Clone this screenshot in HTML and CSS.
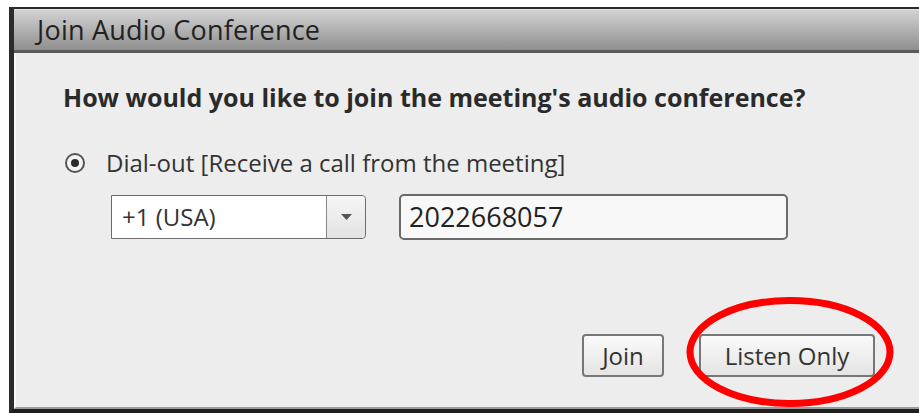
FILE: index.html
```html
<!DOCTYPE html>
<html lang="en">
<head>
<meta charset="utf-8">
<title>Join Audio Conference</title>
<link rel="stylesheet" href="styles.css">
</head>
<body>
<div class="dialog">
  <div class="titlebar">Join Audio Conference</div>
  <div class="content">
    <p class="question">How would you like to join the meeting's audio conference?</p>
    <label class="option">
      <span class="radio"><span class="dot"></span></span>
      <span>Dial-out [Receive a call from the meeting]</span>
    </label>
    <div class="fields">
      <div class="select">
        <span class="select-value">+1 (USA)</span>
        <span class="select-arrow"><svg width="11" height="6" viewBox="0 0 11 6"><path d="M0 0h11L5.5 6z" fill="#555"/></svg></span>
      </div>
      <div class="phone">2022668057</div>
    </div>
    <div class="actions">
      <button class="btn btn-join">Join</button>
      <button class="btn btn-listen">Listen Only</button>
      <svg class="highlight" width="214" height="116" viewBox="0 0 214 116">
        <ellipse cx="107" cy="58" rx="100" ry="51.5" fill="none" stroke="#f00" stroke-width="7"/>
      </svg>
    </div>
  </div>
</div>
</body>
</html>
```
FILE: styles.css
```css
html, body {
  margin: 0;
  padding: 0;
  background: #fff;
  overflow: hidden;
}

body {
  font-family: "Open Sans", "Noto Sans", sans-serif;
  color: #2a2a2a;
}

.dialog {
  margin: 7px 0 0 9px;
  height: 406px;
  border-top: 2px solid #2b2b2b;
  border-left: 5px solid #2b2b2b;
  border-bottom: 4px solid #1e1e1e;
  box-sizing: border-box;
  display: flex;
  flex-direction: column;
  background: #ededed;
}

.titlebar {
  height: 44px;
  box-sizing: border-box;
  padding-left: 23px;
  line-height: 40px;
  font-size: 27px;
  letter-spacing: 0.2px;
  color: #222;
  background: linear-gradient(#d2d2d2, #b5b5b5 45%, #8e8e8e);
  border-top: 1px solid #e2e2e2;
  border-bottom: 3px solid #5a5a5a;
}

.content {
  flex: 1;
  display: flex;
  flex-direction: column;
  padding: 0 0 0 47px;
  border-left: 2px solid #f7f7f7;
  border-bottom: 2px solid #9a9a9a;
}

.question {
  margin: 29px 0 0;
  font-size: 25px;
  line-height: 30px;
  font-weight: 700;
  color: #2a2a2a;
}

.option {
  display: flex;
  align-items: center;
  gap: 21px;
  height: 24px;
  margin: 39px 0 0 2px;
  font-size: 24px;
  line-height: 24px;
  color: #333;
}

.radio {
  width: 16px;
  height: 16px;
  border: 2px solid #555;
  border-radius: 50%;
  background: #f4f4f4;
  display: flex;
  align-items: center;
  justify-content: center;
}

.dot {
  width: 8px;
  height: 8px;
  border-radius: 50%;
  background: #2a2a2a;
}

.fields {
  display: flex;
  align-items: center;
  gap: 33px;
  height: 46px;
  margin: 19px 0 0 48px;
}

.select {
  width: 255px;
  height: 44px;
  box-sizing: border-box;
  display: flex;
  border: 1px solid #6c6c6c;
  border-radius: 0 4px 4px 0;
  background: #fff;
}

.select-value {
  flex: 1;
  padding-left: 10px;
  line-height: 41px;
  font-size: 24px;
  color: #333;
  border-right: 1px solid #888;
}

.select-arrow {
  width: 38px;
  display: flex;
  align-items: center;
  justify-content: center;
  background: linear-gradient(#f6f6f6, #e2e2e2);
  border-radius: 0 4px 4px 0;
}

.phone {
  width: 389px;
  height: 46px;
  box-sizing: border-box;
  padding-left: 8px;
  line-height: 42px;
  border: 2px solid #6a6a6a;
  border-radius: 5px;
  background: #f8f8f8;
  font-size: 27px;
  color: #222;
}

.actions {
  position: relative;
  display: flex;
  gap: 35px;
  margin: 94px 0 0 519px;
}

.btn {
  height: 43px;
  box-sizing: border-box;
  border: 2px solid #777;
  border-radius: 4px;
  background: linear-gradient(#fafafa, #e4e4e4);
  font-family: inherit;
  font-size: 24px;
  line-height: 38px;
  color: #333;
  padding: 0;
}

.btn-join {
  width: 82px;
}

.btn-listen {
  width: 176px;
}

.highlight {
  position: absolute;
  left: 101px;
  top: -40px;
}
```
